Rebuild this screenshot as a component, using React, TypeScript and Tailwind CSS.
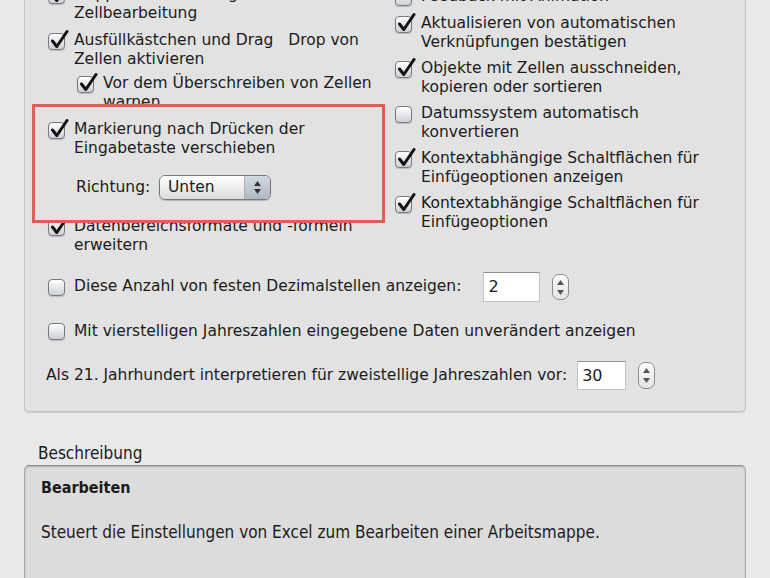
import { ReactNode } from "react";

function Checkbox({ checked }: { checked: boolean }) {
  return (
    <span className="relative mt-[2px] block h-[17px] w-[17px] shrink-0 rounded-[4px] border border-[#737a84] bg-gradient-to-b from-[#ffffff] to-[#cdd0d4] shadow-[0_1px_1px_rgba(0,0,0,0.18)]">
      {checked && (
        <svg
          className="absolute left-[1px] top-[-5px]"
          width="19"
          height="21"
          viewBox="0 0 19 21"
        >
          <path
            d="M2.5 12 L6.8 17.5 L17 2.5"
            fill="none"
            stroke="#111"
            strokeWidth="3"
            strokeLinecap="round"
            strokeLinejoin="round"
          />
        </svg>
      )}
    </span>
  );
}

function Option({
  checked,
  lines,
  className = "",
}: {
  checked: boolean;
  lines: string[];
  className?: string;
}) {
  return (
    <div className={`flex gap-[9px] ${className}`}>
      <Checkbox checked={checked} />
      <div className="whitespace-nowrap leading-[19px]">
        {lines.map((l) => (
          <div key={l}>{l}</div>
        ))}
      </div>
    </div>
  );
}

function Stepper({ className = "" }: { className?: string }) {
  return (
    <div
      className={`flex h-[26px] w-[17px] flex-col items-center justify-center gap-[5px] rounded-[7px] border border-[#8d8d8d] bg-gradient-to-b from-[#fbfbfb] to-[#e4e4e4] ${className}`}
    >
      <svg width="7" height="5" viewBox="0 0 7 5">
        <path d="M3.5 0 L7 5 L0 5 Z" fill="#555" />
      </svg>
      <svg width="7" height="5" viewBox="0 0 7 5">
        <path d="M0 0 L7 0 L3.5 5 Z" fill="#555" />
      </svg>
    </div>
  );
}

function NumberField({ value, width }: { value: string; width: string }): ReactNode {
  return (
    <div
      className={`flex items-center border border-[#c2c2c2] border-t-[#8f8f8f] bg-white pl-[4px] text-[16px] ${width}`}
    >
      {value}
    </div>
  );
}

export default function App() {
  return (
    <div className="h-[578px] w-[770px] overflow-hidden bg-[#e9e9e9] font-['DejaVu_Sans',sans-serif] text-[15.5px] text-[#1b1b1b]">
      {/* Optionen */}
      <div className="mx-[24px] -mt-[30px] rounded-[5px] border border-[#c4c4c4] bg-[#e2e2e2] pb-[21px] pl-[23px] pt-[14px] shadow-[0_1px_1px_rgba(0,0,0,0.12)]">
        <div className="flex">
          <div className="w-[347px]">
            <Option
              checked
              lines={["Doppelklicken ermöglicht direkte", "Zellbearbeitung"]}
            />
            <Option
              checked
              className="mt-[8px]"
              lines={["Ausfüllkästchen und Drag\u00a0\u00a0 Drop von", "Zellen aktivieren"]}
            />
            <Option
              checked
              className="ml-[29px] mt-[5px]"
              lines={["Vor dem Überschreiben von Zellen", "warnen"]}
            />
            <div className="relative z-10 -ml-[16px] -mt-[8px] w-[353px] border-[3px] border-[#e25d57] bg-[#e2e2e2] pb-[20px] pl-[13px] pt-[13px]">
              <Option
                checked
                lines={["Markierung nach Drücken der", "Eingabetaste verschieben"]}
              />
              <div className="mt-[17px] flex items-center pl-[28px]">
                <span className="w-[83px]">Richtung:</span>
                <div className="flex h-[25px] w-[112px] overflow-hidden rounded-[6px] border border-[#787878] shadow-[0_1px_1px_rgba(0,0,0,0.2)]">
                  <div className="flex flex-1 items-center bg-gradient-to-b from-[#ffffff] to-[#dcdcdc] pl-[8px]">
                    Unten
                  </div>
                  <div className="flex w-[26px] flex-col items-center justify-center gap-[3px] border-l border-[#b0b0b0] bg-gradient-to-b from-[#d3d9e2] to-[#aeb7c3]">
                    <svg width="7" height="5" viewBox="0 0 7 5">
                      <path d="M3.5 0 L7 5 L0 5 Z" fill="#333" />
                    </svg>
                    <svg width="7" height="5" viewBox="0 0 7 5">
                      <path d="M0 0 L7 0 L3.5 5 Z" fill="#333" />
                    </svg>
                  </div>
                </div>
              </div>
            </div>
            <Option
              checked
              className="-mt-[6px]"
              lines={["Datenbereichsformate und -formeln", "erweitern"]}
            />
          </div>
          <div className="pt-[2px]">
            <Option checked={false} lines={["Feedback mit Animation"]} />
            <div className="mt-[8px] flex flex-col gap-[7px]">
              <Option
                checked
                lines={["Aktualisieren von automatischen", "Verknüpfungen bestätigen"]}
              />
              <Option
                checked
                lines={["Objekte mit Zellen ausschneiden,", "kopieren oder sortieren"]}
              />
              <Option
                checked={false}
                lines={["Datumssystem automatisch", "konvertieren"]}
              />
              <Option
                checked
                lines={["Kontextabhängige Schaltflächen für", "Einfügeoptionen anzeigen"]}
              />
              <Option
                checked
                lines={["Kontextabhängige Schaltflächen für", "Einfügeoptionen"]}
              />
            </div>
          </div>
        </div>

        <div className="mt-[17px] flex h-[30px] items-center">
          <div className="flex items-center gap-[9px]">
            <span className="-mt-[2px]">
              <Checkbox checked={false} />
            </span>
            <span className="whitespace-nowrap">Diese Anzahl von festen Dezimalstellen anzeigen:</span>
          </div>
          <div className="ml-[22px] flex h-full items-center gap-[12px]">
            <NumberField value="2" width="h-[30px] w-[57px]" />
            <Stepper />
          </div>
        </div>

        <div className="mt-[20px] flex items-center gap-[9px]">
          <span className="-mt-[2px]">
            <Checkbox checked={false} />
          </span>
          <span className="whitespace-nowrap leading-[19px]">
            Mit vierstelligen Jahreszahlen eingegebene Daten unverändert anzeigen
          </span>
        </div>

        <div className="-ml-[2px] mt-[20px] flex h-[29px] items-center">
          <span className="whitespace-nowrap">
            Als 21. Jahrhundert interpretieren für zweistellige Jahreszahlen vor:
          </span>
          <div className="ml-[10px] flex h-full items-center gap-[12px]">
            <NumberField value="30" width="h-[29px] w-[49px]" />
            <Stepper className="h-[27px]" />
          </div>
        </div>
      </div>

      {/* Beschreibung */}
      <div className="mt-[32px] px-[24px] font-['DejaVu_Sans_Condensed','Liberation_Sans_Narrow',sans-serif]">
        <div className="pl-[14px] text-[17px] leading-[19px]">Beschreibung</div>
        <div className="mt-[2px] h-[140px] rounded-t-[5px] border border-[#a9a9a9] border-t-[#8c8c8c] bg-[#dcdcdc] px-[16px] pt-[12px] shadow-[inset_0_1px_2px_rgba(0,0,0,0.2)]">
          <div className="text-[16px] font-bold leading-[20px]">Bearbeiten</div>
          <div className="mt-[24px] text-[17px] leading-[20px]">
            Steuert die Einstellungen von Excel zum Bearbeiten einer Arbeitsmappe.
          </div>
        </div>
      </div>
    </div>
  );
}
